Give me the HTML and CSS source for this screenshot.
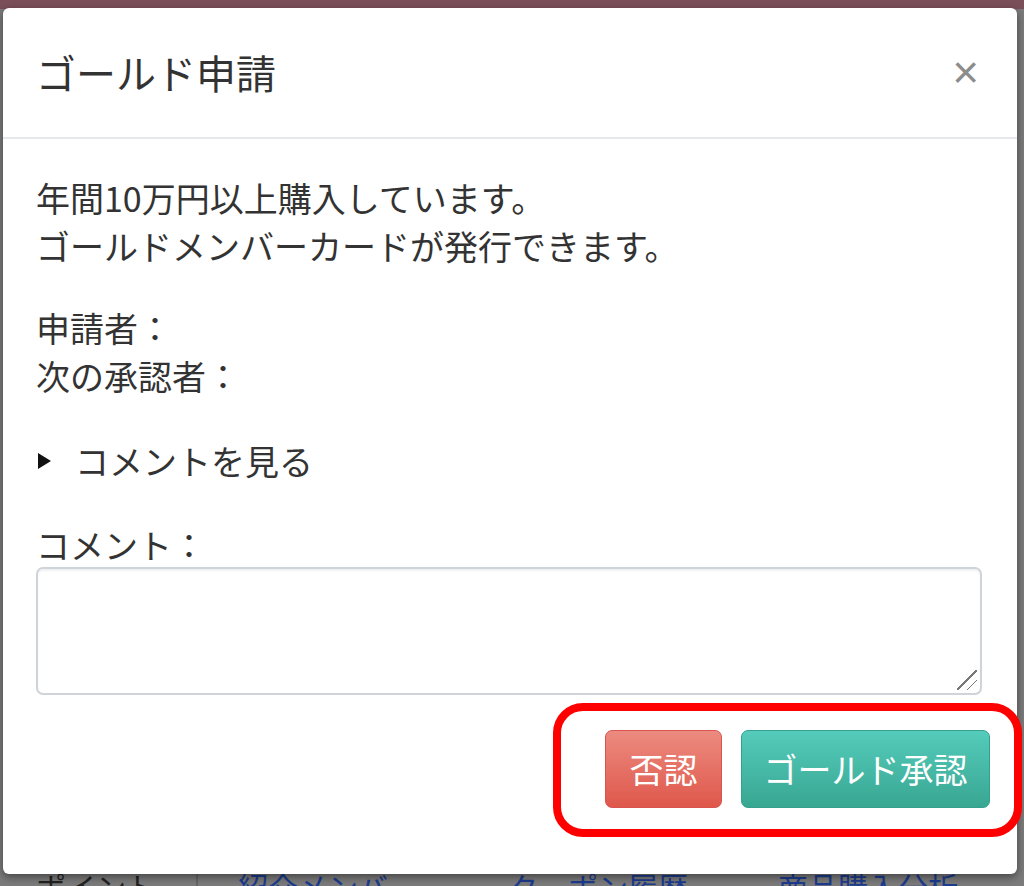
FILE: index.html
```html
<!DOCTYPE html>
<html lang="ja">
<head>
<meta charset="utf-8">
<title>ゴールド申請</title>
<link rel="stylesheet" href="styles.css">
</head>
<body>
<div class="page">
  <div class="page-header"></div>
  <div class="page-nav">
    <span class="nav-item nav-dark">ポイント</span>
    <span class="nav-sep"></span>
    <span class="nav-item">紹介メンバー</span>
    <span class="nav-item">クーポン履歴</span>
    <span class="nav-item">商品購入分析</span>
  </div>
</div>

<div class="modal">
  <div class="modal-header">
    <h4 class="modal-title">ゴールド申請</h4>
    <span class="close">×</span>
  </div>
  <div class="modal-body">
    <p class="para">年間10万円以上購入しています。<br>ゴールドメンバーカードが発行できます。</p>
    <p class="para para-gap">申請者：<br>次の承認者：</p>
    <div class="toggle"><span class="tri"></span><span>コメントを見る</span></div>
    <label class="label">コメント：</label>
    <div class="textarea"><span class="grip"></span></div>
  </div>
  <div class="modal-footer">
    <button class="btn btn-danger">否認</button>
    <button class="btn btn-success">ゴールド承認</button>
  </div>
</div>

<div class="highlight"></div>
</body>
</html>
```
FILE: styles.css
```css
html, body {
  margin: 0;
  padding: 0;
}
body {
  width: 1024px;
  height: 886px;
  overflow: hidden;
  background: #7b7b7b;
  font-family: "Noto Sans CJK JP", "Noto Sans", sans-serif;
  color: #333;
}
.page {
  display: flex;
  flex-direction: column;
}
.page-header {
  height: 9px;
  background: #7b4f5a;
}
.page-nav {
  margin-top: 862px;
  display: flex;
  align-items: flex-start;
  gap: 90px;
  padding-left: 36px;
  font-size: 30px;
  line-height: 30px;
  color: #1c3c8f;
}
.nav-dark { color: #222; }
.nav-sep {
  width: 2px;
  height: 30px;
  background: #666;
  margin-left: -50px;
  margin-right: -50px;
}
.modal {
  position: absolute;
  left: 3px;
  top: 8px;
  width: 1014px;
  height: 866px;
  background: #fff;
  border-radius: 6px;
  box-shadow: 0 3px 8px rgba(0,0,0,0.45);
  display: flex;
  flex-direction: column;
}
.modal-header {
  display: flex;
  align-items: center;
  justify-content: space-between;
  padding: 42px 38px 43px 33px;
  border-bottom: 2px solid #e5e8ec;
}
.modal-title {
  margin: 0;
  font-size: 40px;
  line-height: 44px;
  font-weight: normal;
  color: #333;
}
.close {
  font-family: "Liberation Sans", Arial, sans-serif;
  font-size: 46px;
  line-height: 44px;
  font-weight: normal;
  color: #8c8c8c;
}
.modal-body {
  padding: 35px 35px 0 33px;
  display: flex;
  flex-direction: column;
  font-size: 34px;
  line-height: 48px;
  color: #333;
}
.para {
  margin: 0;
}
.para-gap {
  margin-top: 34px;
}
.toggle {
  margin-top: 37px;
  display: flex;
  align-items: center;
  gap: 24px;
  padding-left: 2px;
}
.tri {
  width: 0;
  height: 0;
  border-top: 8px solid transparent;
  border-bottom: 8px solid transparent;
  border-left: 13px solid #111;
}
.label {
  margin-top: 38px;
  line-height: 44px;
}
.textarea {
  position: relative;
  margin-left: 0;
  height: 124px;
  border: 2px solid #cfd4da;
  border-radius: 7px;
  box-shadow: inset 0 2px 2px rgba(0,0,0,0.06);
}
.grip {
  position: absolute;
  right: 3px;
  bottom: 3px;
  width: 20px;
  height: 20px;
  background:
    linear-gradient(135deg, transparent 0 46%, #777 46% 54%, transparent 54% 100%) no-repeat,
    linear-gradient(135deg, transparent 0 46%, #777 46% 54%, transparent 54% 100%) no-repeat;
  background-size: 20px 20px, 10px 10px;
  background-position: 0 0, 100% 100%;
}
.modal-footer {
  display: flex;
  justify-content: flex-end;
  gap: 19px;
  padding: 35px 27px 0 0;
}
.btn {
  font-family: "Noto Sans CJK JP", "Noto Sans", sans-serif;
  font-size: 34px;
  line-height: 40px;
  height: 78px;
  padding: 0;
  color: #fff;
  border-radius: 7px;
  cursor: pointer;
}
.btn-danger {
  width: 117px;
  background: linear-gradient(#ec8b80, #df574b);
  border: 1px solid #d9534f;
}
.btn-success {
  width: 249px;
  background: linear-gradient(#55cbbb, #38a792);
  border: 1px solid #34a08d;
}
.highlight {
  position: absolute;
  left: 553px;
  top: 703px;
  width: 453px;
  height: 118px;
  border: 8px solid #ff0000;
  border-radius: 30px;
}
```
